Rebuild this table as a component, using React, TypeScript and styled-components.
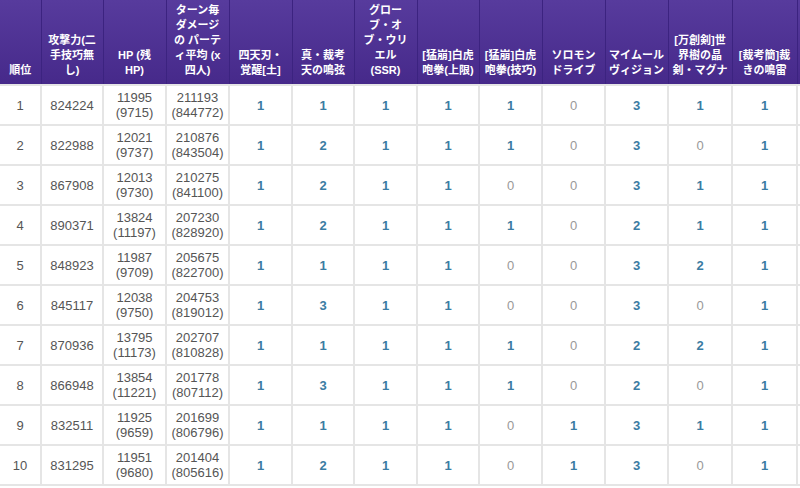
import React from "react";
import styled, { createGlobalStyle } from "styled-components";

const GlobalStyle = createGlobalStyle`
  html, body {
    margin: 0;
    padding: 0;
    background: #ffffff;
    overflow: hidden;
  }
  body {
    font-family: "Liberation Sans", "Noto Sans CJK JP", sans-serif;
  }
`;

const Frame = styled.div`
  width: 800px;
  height: 488px;
  overflow: hidden;
`;

const Table = styled.table`
  border-collapse: collapse;
  table-layout: fixed;
  width: 860px;
  border-bottom: 2px solid #6b54b2;
`;

const HeadRow = styled.tr`
  height: 85px;
  background: linear-gradient(#573b9d, #46298a);
`;

const HeadCell = styled.th`
  border-left: 1px solid #3c2380;
  border-right: 1px solid #3c2380;
  padding: 0 3px 6px;
  vertical-align: bottom;
  text-align: center;
  color: #ffffff;
  font-size: 11px;
  font-weight: bold;
  line-height: 15px;
  white-space: nowrap;
  overflow: hidden;

  &:first-child {
    border-left: none;
  }
`;

const BodyRow = styled.tr`
  height: 40px;
`;

const Cell = styled.td`
  border: 2px solid #e5e5e5;
  padding: 0 2px;
  text-align: center;
  vertical-align: middle;
  color: #555555;
  font-size: 13px;
  line-height: 15px;
  white-space: nowrap;
  overflow: hidden;

  &:first-child {
    border-left: none;
  }
`;

const Count = styled.span<{ $zero: boolean }>`
  color: ${(p) => (p.$zero ? "#999999" : "#3b7ca3")};
  font-weight: ${(p) => (p.$zero ? "normal" : "bold")};
`;

const widths = [41, 62, 63, 63, 63, 62, 63, 62, 63, 63, 63, 64, 65, 63];

const headers: string[][] = [
  ["順位"],
  ["攻撃力(二", "手技巧無", "し)"],
  ["HP (残", "HP)"],
  ["ターン毎", "ダメージ", "の パーテ", "ィ平均 (x", "四人)"],
  ["四天刃・", "覚醒[土]"],
  ["真・裁考", "天の鳴弦"],
  ["グロー", "ブ・オ", "ブ・ウリ", "エル", "(SSR)"],
  ["[猛崩]白虎", "咆拳(上限)"],
  ["[猛崩]白虎", "咆拳(技巧)"],
  ["ソロモン", "ドライブ"],
  ["マイムール", "ヴィジョン"],
  ["[万創剣]世", "界樹の晶", "剣・マグナ"],
  ["[裁考簡]裁", "きの鳴雷"],
  [],
];

type Row = {
  atk: string;
  hp: string;
  rest: string;
  dmg: string;
  party: string;
  counts: number[];
};

const rows: Row[] = [
  { atk: "824224", hp: "11995", rest: "9715", dmg: "211193", party: "844772", counts: [1, 1, 1, 1, 1, 0, 3, 1, 1] },
  { atk: "822988", hp: "12021", rest: "9737", dmg: "210876", party: "843504", counts: [1, 2, 1, 1, 1, 0, 3, 0, 1] },
  { atk: "867908", hp: "12013", rest: "9730", dmg: "210275", party: "841100", counts: [1, 2, 1, 1, 0, 0, 3, 1, 1] },
  { atk: "890371", hp: "13824", rest: "11197", dmg: "207230", party: "828920", counts: [1, 2, 1, 1, 1, 0, 2, 1, 1] },
  { atk: "848923", hp: "11987", rest: "9709", dmg: "205675", party: "822700", counts: [1, 1, 1, 1, 0, 0, 3, 2, 1] },
  { atk: "845117", hp: "12038", rest: "9750", dmg: "204753", party: "819012", counts: [1, 3, 1, 1, 0, 0, 3, 0, 1] },
  { atk: "870936", hp: "13795", rest: "11173", dmg: "202707", party: "810828", counts: [1, 1, 1, 1, 1, 0, 2, 2, 1] },
  { atk: "866948", hp: "13854", rest: "11221", dmg: "201778", party: "807112", counts: [1, 3, 1, 1, 1, 0, 2, 0, 1] },
  { atk: "832511", hp: "11925", rest: "9659", dmg: "201699", party: "806796", counts: [1, 1, 1, 1, 0, 1, 3, 1, 1] },
  { atk: "831295", hp: "11951", rest: "9680", dmg: "201404", party: "805616", counts: [1, 2, 1, 1, 0, 1, 3, 0, 1] },
];

const App = () => {
  return (
    <>
      <GlobalStyle />
      <Frame>
        <Table>
          <colgroup>
            {widths.map((w, i) => (
              <col key={i} style={{ width: w }} />
            ))}
          </colgroup>
          <thead>
            <HeadRow>
              {headers.map((lines, i) => (
                <HeadCell key={i}>
                  {lines.map((l, j) => (
                    <React.Fragment key={j}>
                      {j > 0 && <br />}
                      {l}
                    </React.Fragment>
                  ))}
                </HeadCell>
              ))}
            </HeadRow>
          </thead>
          <tbody>
            {rows.map((r, i) => (
              <BodyRow key={i}>
                <Cell>{i + 1}</Cell>
                <Cell>{r.atk}</Cell>
                <Cell>
                  {r.hp}
                  <br />({r.rest})
                </Cell>
                <Cell>
                  {r.dmg}
                  <br />({r.party})
                </Cell>
                {r.counts.map((c, j) => (
                  <Cell key={j}>
                    <Count $zero={c === 0}>{c}</Count>
                  </Cell>
                ))}
                <Cell />
              </BodyRow>
            ))}
          </tbody>
        </Table>
      </Frame>
    </>
  );
};

export default App;
